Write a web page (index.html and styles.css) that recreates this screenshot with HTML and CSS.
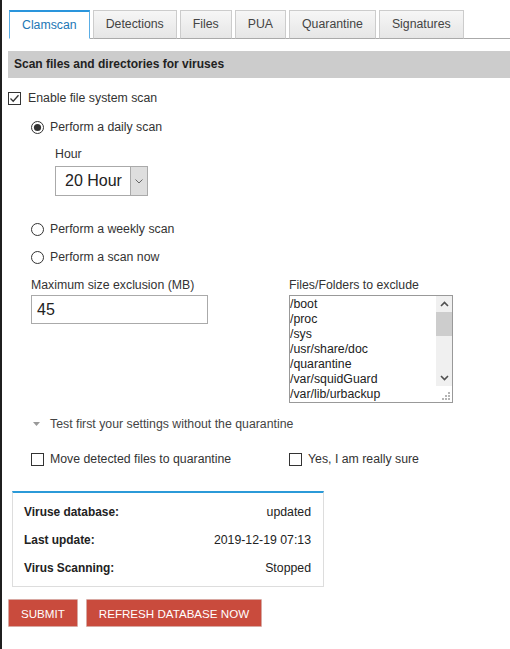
FILE: index.html
```html
<!DOCTYPE html>
<html>
<head>
<meta charset="utf-8">
<link rel="stylesheet" href="styles.css">
</head>
<body>
<div class="frame">
  <ul class="tabs">
    <li class="tab active">Clamscan</li>
    <li class="tab">Detections</li>
    <li class="tab">Files</li>
    <li class="tab">PUA</li>
    <li class="tab">Quarantine</li>
    <li class="tab">Signatures</li>
  </ul>

  <div class="section-bar">Scan files and directories for viruses</div>

  <div class="row enable">
    <svg class="box" width="13" height="13" viewBox="0 0 13 13"><rect x="0.5" y="0.5" width="12" height="12" fill="#fff" stroke="#333"/><path d="M2.5 6.5 L5.2 9.2 L10.5 3.2" fill="none" stroke="#333" stroke-width="1.3"/></svg>
    <span>Enable file system scan</span>
  </div>

  <div class="row radio-row first">
    <svg class="box" width="13" height="13" viewBox="0 0 13 13"><circle cx="6.5" cy="6.5" r="6" fill="#fff" stroke="#333"/><circle cx="6.5" cy="6.5" r="3.6" fill="#333"/></svg>
    <span>Perform a daily scan</span>
  </div>

  <div class="hour">
    <div class="label">Hour</div>
    <div class="select">
      <span class="select-value">20 Hour</span>
      <span class="select-arrow"><svg width="8" height="5" viewBox="0 0 8 5"><path d="M0.5 0.5 L4 4 L7.5 0.5" fill="none" stroke="#666" stroke-width="1"/></svg></span>
    </div>
  </div>

  <div class="row radio-row weekly">
    <svg class="box" width="13" height="13" viewBox="0 0 13 13"><circle cx="6.5" cy="6.5" r="6" fill="#fff" stroke="#333"/></svg>
    <span>Perform a weekly scan</span>
  </div>

  <div class="row radio-row now">
    <svg class="box" width="13" height="13" viewBox="0 0 13 13"><circle cx="6.5" cy="6.5" r="6" fill="#fff" stroke="#333"/></svg>
    <span>Perform a scan now</span>
  </div>

  <div class="cols">
    <div class="col">
      <div class="label">Maximum size exclusion (MB)</div>
      <div class="input">45</div>
    </div>
    <div class="col">
      <div class="label">Files/Folders to exclude</div>
      <div class="listbox">
        <div class="list-content">
          <div>/boot</div>
          <div>/proc</div>
          <div>/sys</div>
          <div>/usr/share/doc</div>
          <div>/quarantine</div>
          <div>/var/squidGuard</div>
          <div>/var/lib/urbackup</div>
        </div>
        <div class="sb">
          <div class="sb-btn"><svg width="9" height="6" viewBox="0 0 9 6"><path d="M1 5 L4.5 1.5 L8 5" fill="none" stroke="#505050" stroke-width="1.6"/></svg></div>
          <div class="sb-thumb"></div>
          <div class="sb-track"></div>
          <div class="sb-btn"><svg width="9" height="6" viewBox="0 0 9 6"><path d="M1 1 L4.5 4.5 L8 1" fill="none" stroke="#505050" stroke-width="1.6"/></svg></div>
          <div class="sb-corner"><svg width="16" height="16" viewBox="0 0 16 16"><g fill="#b5b5b5"><rect x="12" y="6" width="2" height="2"/><rect x="9" y="9" width="2" height="2"/><rect x="12" y="9" width="2" height="2"/><rect x="6" y="12" width="2" height="2"/><rect x="9" y="12" width="2" height="2"/><rect x="12" y="12" width="2" height="2"/></g></svg></div>
        </div>
      </div>
    </div>
  </div>

  <div class="row toggle">
    <svg class="tri" width="7" height="4" viewBox="0 0 7 4"><polygon points="0,0 7,0 3.5,4" fill="#999"/></svg>
    <span>Test first your settings without the quarantine</span>
  </div>

  <div class="cols checks">
    <div class="row col-row">
      <svg class="box" width="13" height="13" viewBox="0 0 13 13"><rect x="0.5" y="0.5" width="12" height="12" fill="#fff" stroke="#333"/></svg>
      <span>Move detected files to quarantine</span>
    </div>
    <div class="row col-row">
      <svg class="box" width="13" height="13" viewBox="0 0 13 13"><rect x="0.5" y="0.5" width="12" height="12" fill="#fff" stroke="#333"/></svg>
      <span>Yes, I am really sure</span>
    </div>
  </div>

  <div class="info">
    <div class="info-row"><span class="k">Viruse database:</span><span>updated</span></div>
    <div class="info-row"><span class="k">Last update:</span><span>2019-12-19 07:13</span></div>
    <div class="info-row"><span class="k">Virus Scanning:</span><span>Stopped</span></div>
  </div>

  <div class="buttons">
    <button class="btn">SUBMIT</button>
    <button class="btn">REFRESH DATABASE NOW</button>
  </div>
</div>
</body>
</html>
```

FILE: styles.css
```css
html, body {
  margin: 0;
  padding: 0;
  background: #fff;
}
body {
  font-family: "Liberation Sans", Arial, sans-serif;
  font-size: 12.3px;
  color: #333;
  overflow: hidden;
}
.frame {
  border-left: 2px solid #1f1f1f;
  min-height: 649px;
  box-sizing: border-box;
  padding: 10px 0 0 6px;
}
.tabs {
  list-style: none;
  margin: 0 0 0 1px;
  padding: 0;
  display: flex;
  border-bottom: 1px solid #aaa;
  height: 28px;
}
.tab {
  box-sizing: border-box;
  height: 29px;
  margin-right: 3px;
  margin-bottom: -1px;
  padding: 0 12px;
  line-height: 27px;
  font-size: 12.3px;
  color: #444;
  border: 1px solid #ccc;
  border-bottom-color: #aaa;
  background: linear-gradient(#f6f6f6, #e6e6e6);
}
.tab.active {
  background: #fff;
  color: #2277b5;
  border-color: #5aaee6;
  border-top: 2px solid #2a95dc;
  line-height: 26px;
  border-bottom-color: #fff;
}
.section-bar {
  margin-top: 12px;
  height: 27px;
  line-height: 27px;
  background: #ccc;
  padding-left: 6px;
  font-weight: bold;
  font-size: 12px;
  color: #222;
}
.row {
  display: flex;
  align-items: center;
  height: 18px;
}
.row .box {
  flex: none;
  margin-right: 6px;
}
.enable {
  margin-top: 11px;
}
.enable .box {
  margin-right: 7px;
}
.radio-row {
  padding-left: 23px;
}
.radio-row.first {
  margin-top: 11px;
}
.hour {
  margin-top: 9px;
  padding-left: 47px;
}
.label {
  height: 18px;
  line-height: 18px;
}
.select {
  margin-top: 3px;
  width: 93px;
  height: 30px;
  box-sizing: border-box;
  border: 1px solid #aaa;
  display: flex;
  background: #fff;
}
.select-value {
  flex: 1;
  font-size: 16px;
  line-height: 28px;
  padding-left: 9px;
  color: #222;
}
.select-arrow {
  width: 16px;
  border-left: 1px solid #aaa;
  background: #dedede;
  display: flex;
  align-items: center;
  justify-content: center;
}
.weekly {
  margin-top: 24px;
}
.now {
  margin-top: 10px;
}
.cols {
  display: grid;
  grid-template-columns: 258px 1fr;
  padding-left: 23px;
}
.cols:not(.checks) {
  margin-top: 10px;
}
.cols .label {
  margin-bottom: 1px;
}
.input {
  width: 177px;
  height: 29px;
  box-sizing: border-box;
  border: 1px solid #aaa;
  font-size: 16px;
  line-height: 27px;
  padding-left: 5px;
  color: #222;
}
.listbox {
  width: 164px;
  height: 108px;
  box-sizing: border-box;
  border: 1px solid #999;
  display: flex;
  overflow: hidden;
}
.list-content {
  flex: 1;
  padding: 1px 0 0 0;
  line-height: 15px;
  font-size: 12.3px;
  color: #222;
  overflow: hidden;
  white-space: nowrap;
}
.sb {
  width: 16px;
  display: flex;
  flex-direction: column;
}
.sb-btn {
  height: 16px;
  background: #f0f0f0;
  display: flex;
  align-items: center;
  justify-content: center;
}
.sb-thumb {
  height: 24px;
  background: #cdcdcd;
}
.sb-track {
  flex: 1;
  background: #f0f0f0;
}
.sb-corner {
  height: 16px;
  background: #fff;
}
.toggle {
  margin-top: 12px;
  padding-left: 25px;
}
.toggle .tri {
  margin-right: 10px;
}
.toggle span {
  color: #444;
}
.checks {
  margin-top: 17px;
}
.info {
  margin: 23px 0 0 4px;
  width: 312px;
  box-sizing: border-box;
  border: 1px solid #ddd;
  border-top: 2px solid #2b9ad8;
  padding: 5px 12px 4px 11px;
}
.info-row {
  display: flex;
  justify-content: space-between;
  height: 28px;
  line-height: 28px;
  color: #222;
}
.info-row .k {
  font-weight: bold;
  font-size: 11.9px;
}
.buttons {
  margin-top: 12px;
  display: flex;
  gap: 8px;
}
.btn {
  height: 28px;
  box-sizing: border-box;
  padding: 0 12px;
  margin: 0;
  border: 1px solid #d8a8a2;
  background: #c94b3d;
  color: #fff;
  font-family: "Liberation Sans", Arial, sans-serif;
  font-size: 11.6px;
  border-radius: 1px;
}
```
